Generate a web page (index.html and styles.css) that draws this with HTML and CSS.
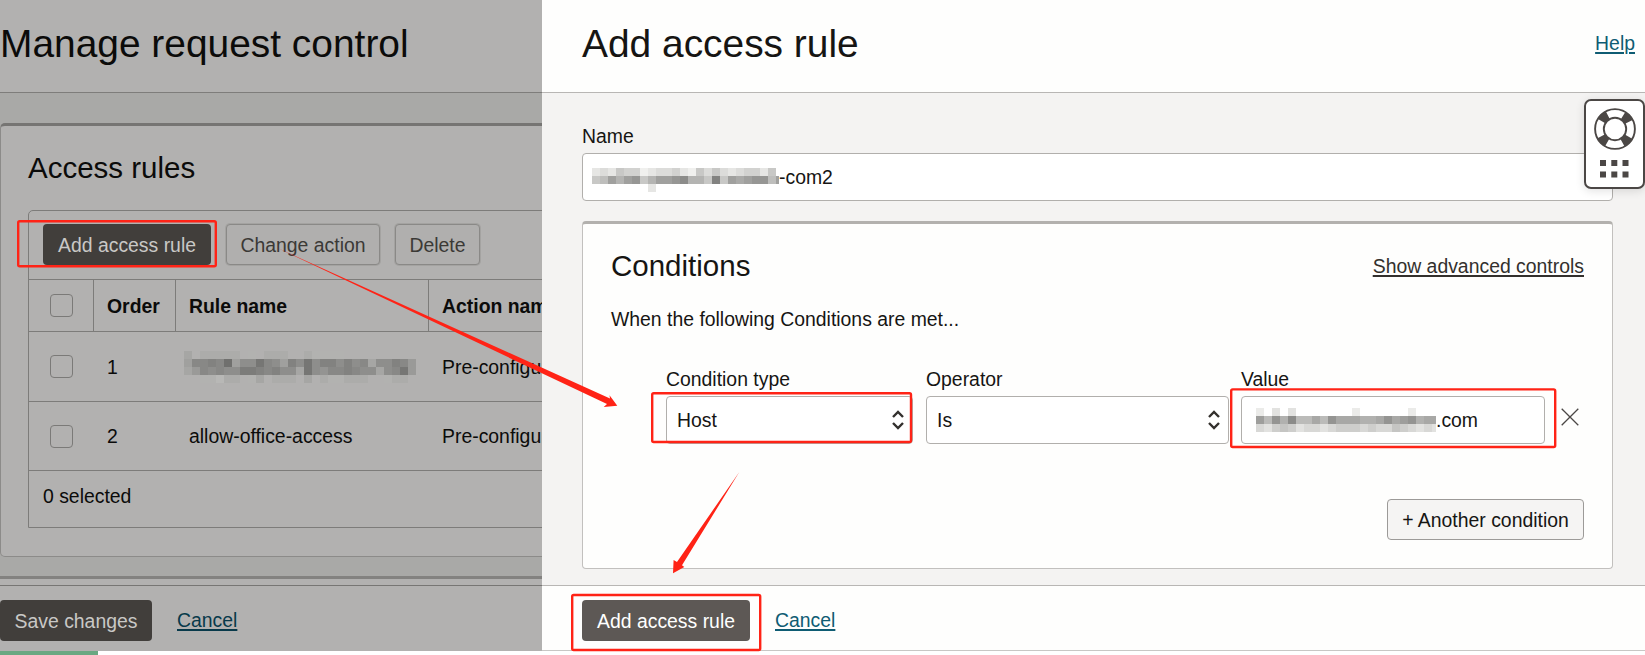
FILE: index.html
```html
<!DOCTYPE html>
<html lang="en">
<head>
<meta charset="utf-8">
<title>Manage request control</title>
<link rel="stylesheet" href="styles.css">
</head>
<body>
<div class="app">
  <main class="page">
    <header class="head"><h1>Manage request control</h1></header>
    <div class="page-body">
      <section class="rules">
        <h2>Access rules</h2>
        <div class="table">
          <div class="toolbar">
            <button class="btn dark">Add access rule</button>
            <button class="btn ghost">Change action</button>
            <button class="btn ghost">Delete</button>
          </div>
          <div class="row th"><span class="c"><i class="check"></i></span><span class="c">Order</span><span class="c">Rule name</span><span class="c">Action name</span></div>
          <div class="row"><span class="c"><i class="check"></i></span><span class="c">1</span><span class="c"><svg class="mosaic m-row" id="m1" width="232" height="32"></svg></span><span class="c">Pre-configured</span></div>
          <div class="row r2"><span class="c"><i class="check"></i></span><span class="c">2</span><span class="c">allow-office-access</span><span class="c">Pre-configured</span></div>
          <div class="selected">0 selected</div>
        </div>
      </section>
      <div class="next-card"></div>
    </div>
    <footer class="foot"><button class="btn dark">Save changes</button><a class="link">Cancel</a></footer>
  </main>
  <aside class="drawer">
    <header class="head"><h1>Add access rule</h1><a class="link">Help</a></header>
    <div class="drawer-body">
      <label class="label name-label">Name</label>
      <div class="field name-field"><svg class="mosaic m-name" id="m2" width="187" height="24"></svg><span>-com2</span></div>
      <section class="conditions">
        <div class="cond-head"><h2>Conditions</h2><a class="adv">Show advanced controls</a></div>
        <p class="lead">When the following Conditions are met...</p>
        <div class="cond-row">
          <div class="col type"><label class="label">Condition type</label>
            <div class="field"><span>Host</span><svg class="sort" width="14" height="22" viewBox="0 0 14 22"><path d="M2 8l5-5 5 5M2 14l5 5 5-5"/></svg></div></div>
          <div class="col op"><label class="label">Operator</label>
            <div class="field"><span>Is</span><svg class="sort" width="14" height="22" viewBox="0 0 14 22"><path d="M2 8l5-5 5 5M2 14l5 5 5-5"/></svg></div></div>
          <div class="col val"><label class="label">Value</label>
            <div class="field"><svg class="mosaic" id="m3" width="180" height="24"></svg><span>.com</span></div></div>
          <svg class="close" width="18" height="18" viewBox="0 0 18 18"><path d="M.7.7l16.6 16.6M17.3.7L.7 17.3"/></svg>
        </div>
        <div class="more"><button class="btn light">+ Another condition</button></div>
      </section>
    </div>
    <footer class="foot"><button class="btn dark">Add access rule</button><a class="link">Cancel</a></footer>
  </aside>
</div>
<div class="strip"><i class="strip-bar"></i></div>

<div class="help-widget">
  <svg width="42" height="42" viewBox="0 0 42 42">
    <circle cx="21" cy="21" r="15.5" fill="none" stroke="#4b4745" stroke-width="9.5" stroke-dasharray="8.5 15.85" stroke-dashoffset="-7.93"/>
    <circle cx="21" cy="21" r="19.9" fill="none" stroke="#4b4745" stroke-width="1.9"/>
    <circle cx="21" cy="21" r="11.2" fill="#fff" stroke="#4b4745" stroke-width="1.9"/>
  </svg>
  <svg width="29" height="18" viewBox="0 0 29 18" fill="#4b4745"><path d="M0 0h6v6H0zM11.3 0h6v6h-6zM22.5 0h6v6h-6zM0 11.5h6v6H0zM11.3 11.5h6v6h-6zM22.5 11.5h6v6h-6z"/></svg>
</div>

<svg class="marks" width="1645" height="655" viewBox="0 0 1645 655">
  <g fill="none" stroke="#ff2316" stroke-width="2.4">
    <rect x="18.2" y="221.2" width="197.6" height="45" rx="1.5"/>
    <rect x="652.2" y="393.2" width="258.8" height="48.8" rx="1.5"/>
    <rect x="1231.2" y="389.4" width="324" height="57.6" rx="1.5"/>
    <rect x="572.2" y="595" width="188" height="55" rx="1.5"/>
  </g>
  <g fill="#ff2316">
    <path d="M276 247.3L610 398.5 609.5 395.3 617.3 405.7 603.7 407 607 404z"/>
    <path d="M739.3 472L682 565.3 684.3 567 673 573.3 673.6 560 677 562z"/>
  </g>
</svg>
<script src="mosaic.js"></script>
</body>
</html>
```
FILE: mosaic.js
```js
// Redacted names: each string is one row of grey levels, one hex digit per cell.
function mosaic(id, size, rows, lo, hi) {
  const svg = document.getElementById(id);
  rows.forEach((row, y) => [...row].forEach((d, x) => {
    if (d === '.') return;
    const v = Math.round(lo + (hi - lo) * parseInt(d, 16) / 15);
    const r = document.createElementNS('http://www.w3.org/2000/svg', 'rect');
    r.setAttribute('x', x * size);
    r.setAttribute('y', y * 8);
    r.setAttribute('width', size);
    r.setAttribute('height', 8);
    r.setAttribute('fill', `rgb(${v},${v},${v - 2})`);
    svg.appendChild(r);
  }));
}
mosaic('m1', 8, ['b.ccccc.d.ccc..cdddd.......', 'a66562a77367a5737557576b77569', 'b9676774456577b378665677b7639', '..ddecc.db.ccc.b.cddccc..dcc.'], 100, 190);
mosaic('m2', 8, ['dcda bbedccbdeacacdcbbda'.replace(' ', ''), 'a96865a8665488a3a6765596', '.......d'], 100, 250);
mosaic('m3', 8, ['e.d.d.......e......e', '69584997957778875765877', 'cdbabdccdcbbbcbccabcdcd'], 100, 245);
```
FILE: styles.css
```css
* { box-sizing: border-box; }
body { margin: 0; width: 1645px; height: 655px; overflow: hidden; background: #fff; position: relative;
  font-family: "Liberation Sans", Arial, sans-serif; font-size: 19.4px; line-height: 22px; color: #161513; }
h1, h2, p { margin: 0; font-weight: 400; }
h1 { font-size: 38.9px; line-height: 44px; }
h2 { font-size: 29.5px; line-height: 34px; }
.app { display: grid; grid-template-columns: 542px 1fr; height: 651px; }
.page, .drawer { display: grid; grid-template-rows: 93px 493px 1fr; min-width: 0; overflow: hidden; }
.page { background: #b2b1b0; color: #0b0b0a; }
.drawer { background: #fefefd; border-bottom: 1px solid #c8c7c5; }
.head { display: flex; justify-content: space-between; align-items: flex-start; padding-top: 22px; border-bottom: 1px solid #7e7d7b; }
.drawer .head { padding: 22px 11px 0 40px; border-color: #b8b6b4; }
.head .link { margin-top: 10px; }
.link { color: #0f5c73; text-decoration: underline; text-decoration-thickness: 1.5px; text-underline-offset: 2px; }
.page .link { color: #07394a; }

.page-body { background: #a9a9a7; padding-top: 30px; overflow: hidden; border-bottom: 1px solid #777674; }
.rules { width: 600px; height: 434px; padding: 25px 0 0 27px; background: #b2b1b0; border: 1px solid #8c8b89; border-top: 3px solid #767573; border-radius: 5px; }
.next-card { width: 600px; height: 20px; margin-top: 19px; border-top: 3px solid #838280; background: #b2b1b0; }
.table { margin-top: 25px; height: 318px; border: 1px solid #7d7c7a; border-radius: 5px 0 0 0; width: 580px; }
.toolbar { display: flex; gap: 15px; padding: 13px 0 0 14px; height: 68px; }
.btn { height: 41px; padding: 0 14px; border-radius: 4px; border: 1px solid transparent; font: inherit; white-space: nowrap; }
.dark { background: #5d5855; color: #fff; }
.page .dark { background: #413e3b; color: #c9c8c6; }
.toolbar .dark { width: 168px; padding: 0; }
.ghost { background: #b0afae; border-color: #8a8987; color: #3b3936; box-shadow: 0 0 0 1px #a4a3a1; }
.toolbar .ghost { width: 154px; padding: 0; }
.toolbar .ghost:last-child { width: 85px; }
.light { background: #f5f4f3; border-color: #9c9a98; color: #161513; }
.row { display: grid; grid-template-columns: 64px 82px 253px 180px; height: 70px; align-items: stretch; border-top: 1px solid #7d7c7a; }
.c { display: flex; align-items: center; padding-left: 14px; white-space: nowrap; }
.c:first-child { padding-left: 21px; }
.th { height: 52px; font-weight: 700; }
.th .c + .c { border-left: 1px solid #7d7c7a; }
.r2 { height: 69px; }
.th .c:nth-child(n+2) { padding-left: 13px; }
.check { width: 23px; height: 23px; border: 1px solid #7b7a78; border-radius: 4px; }
.m-row { margin-left: -5px; }
.selected { border-top: 1px solid #7d7c7a; padding: 14px 0 0 14px; }

.foot { display: flex; gap: 25px; padding-top: 14px; }
.foot .dark { height: 41px; }
.foot .link { margin-top: 9px; }
.page .foot .dark { width: 152px; padding: 0; }
.drawer .foot { padding-left: 40px; }
.drawer .foot .dark { width: 168px; padding: 0; }

.drawer-body { background: #f4f3f2; border-bottom: 1px solid #b8b6b4; padding: 32px 33px 0 40px; }
.label { display: block; height: 28px; }
.field { display: flex; align-items: center; height: 48px; background: #fff; border: 1px solid #b1afac; border-radius: 4px; }
.name-field { padding-left: 9px; width: 1031px; }
.mosaic { flex: none; }
.m-name { margin-top: 6px; }
.conditions { margin-top: 20px; width: 1031px; height: 348px; padding: 25px 28px 0; background: #fefefd; border: 1px solid #c2c0be; border-top: 3px solid #b3b1ae; border-radius: 4px; }
.cond-head { display: flex; justify-content: space-between; }
.adv { text-decoration: underline; text-decoration-thickness: 1.5px; text-underline-offset: 2px; color: #33302d; margin-top: 6px; }
.lead { margin-top: 25px; }
.cond-row { display: flex; padding-left: 55px; margin-top: 38px; }
.type { width: 247px; }
.op { width: 303px; margin-left: 13px; }
.val { width: 304px; margin-left: 12px; }
.type .field, .op .field { justify-content: space-between; padding: 0 7px 0 10px; }
.val .field { padding-left: 14px; }
.sort { fill: none; stroke: #33302d; stroke-width: 2.4; }
.close { margin: 40px 0 0 16px; fill: none; stroke: #4b4745; stroke-width: 1.3; }
.more { display: flex; justify-content: flex-end; margin-top: 55px; }
.more .btn { width: 197px; padding: 0; }

.strip { height: 4px; background: #fff; }
.strip-bar { display: block; width: 98px; height: 4px; background: #6aa882; }
.help-widget { position: absolute; left: 1584px; top: 99px; width: 61px; height: 90px; background: #fff; border: 2px solid #4b4745; border-radius: 7px;
  display: flex; flex-direction: column; align-items: center; padding-top: 7px; gap: 10px; box-shadow: 0 2px 10px rgba(0,0,0,.12); }
.marks { position: absolute; left: 0; top: 0; pointer-events: none; }
```
